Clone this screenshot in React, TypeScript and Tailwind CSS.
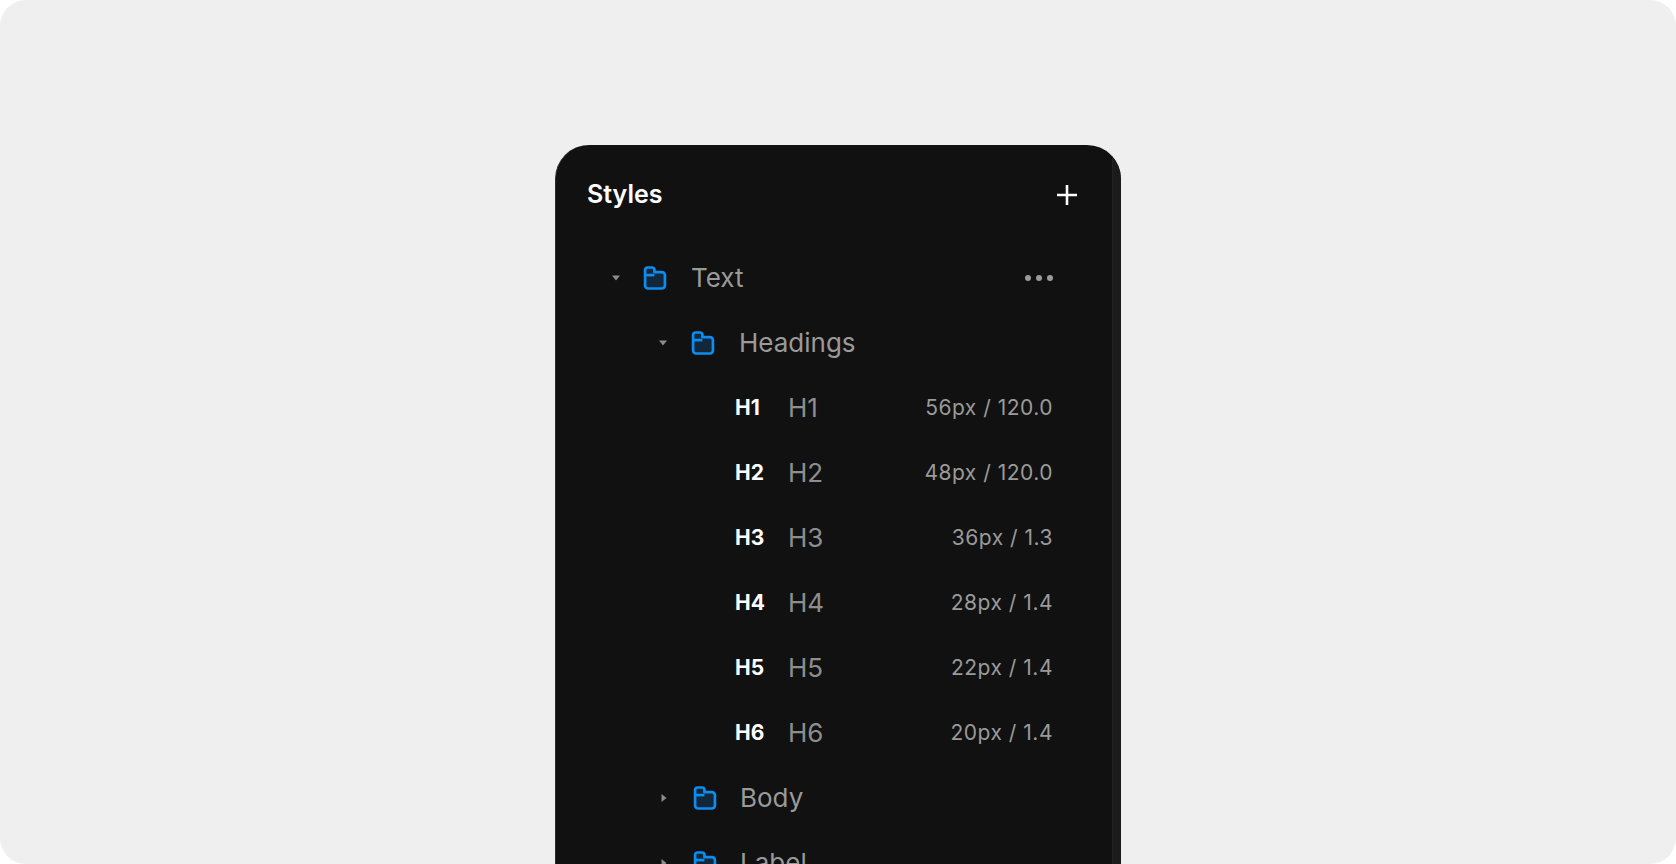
import React from "react";

const Folder = () => (
  <svg width="28" height="28" viewBox="0 0 24 24" fill="none">
    <path d="M3.5 9V5a2 2 0 0 1 2-2h4a2 2 0 0 1 2 2v2h6.5a2.5 2.5 0 0 1 2.5 2.5v9a2.5 2.5 0 0 1-2.5 2.5H6a2.5 2.5 0 0 1-2.5-2.5z" fill="#13273a" stroke="#0b8df2" strokeWidth="2.3" strokeLinejoin="round" />
    <path d="M3.5 9.5h8" stroke="#0b8df2" strokeWidth="2.3" />
  </svg>
);

const Down = () => (
  <svg width="10" height="8" viewBox="0 0 10 8"><path d="M1 1.5h8L5 6.5z" fill="#8c8c8c" /></svg>
);
const Right = () => (
  <svg width="8" height="10" viewBox="0 0 8 10"><path d="M1.5 1v8L6.5 5z" fill="#8c8c8c" /></svg>
);

const rows = [
  ["H1", "56px / 120.0"],
  ["H2", "48px / 120.0"],
  ["H3", "36px / 1.3"],
  ["H4", "28px / 1.4"],
  ["H5", "22px / 1.4"],
  ["H6", "20px / 1.4"],
];

export default function App() {
  return (
    <div className="w-[1676px] h-[864px] bg-white overflow-hidden" style={{ fontFamily: "Inter, 'Noto Sans', sans-serif" }}>
      <div className="w-full h-full bg-[#efefef] rounded-[26px] overflow-hidden pt-[145px] pl-[555px]">
        <div className="w-[566px] h-[760px] bg-[#111111] rounded-t-[34px] border-l border-[#2c2c2c] flex overflow-hidden">
          <div className="flex-1 flex flex-col">
            <div className="h-[100px] flex items-center justify-between pl-[31px] pr-[34px]">
              <span className="text-white text-[25px] font-semibold">Styles</span>
              <svg width="22" height="22" viewBox="0 0 22 22"><path d="M11 1v20M1 11h20" stroke="white" strokeWidth="2.6" /></svg>
            </div>
            <div className="h-[65px] flex items-center pr-[59px]">
              <div className="w-[58px] pl-[55px]"><Down /></div>
              <div className="ml-[27px]"><Folder /></div>
              <span className="ml-[22px] text-[26px] text-[#9a9a9a]">Text</span>
              <div className="ml-auto flex gap-[5px]">
                <span className="w-[6px] h-[6px] rounded-full bg-[#9a9a9a]" />
                <span className="w-[6px] h-[6px] rounded-full bg-[#9a9a9a]" />
                <span className="w-[6px] h-[6px] rounded-full bg-[#9a9a9a]" />
              </div>
            </div>
            <div className="h-[65px] flex items-center">
              <div className="pl-[102px]"><Down /></div>
              <div className="ml-[21px]"><Folder /></div>
              <span className="ml-[22px] text-[26px] text-[#9a9a9a]">Headings</span>
            </div>
            {rows.map(([h, v]) => (
              <div key={h} className="h-[65px] flex items-center pl-[179px] pr-[59px]">
                <span className="w-[53px] text-[21px] font-bold text-white">{h}</span>
                <span className="text-[26px] text-[#8e8e8e]">{h}</span>
                <span className="ml-auto text-[21px] tracking-[0.5px] text-[#9a9a9a]">{v}</span>
              </div>
            ))}
            {["Body", "Label"].map((b) => (
              <div key={b} className="h-[65px] flex items-center shrink-0">
                <div className="pl-[104px]"><Right /></div>
                <div className="ml-[23px]"><Folder /></div>
                <span className="ml-[21px] text-[26px] text-[#9a9a9a]">{b}</span>
              </div>
            ))}
          </div>
          <div className="w-[9px] bg-[#1b1b1b] border-l border-[#222]" />
        </div>
      </div>
    </div>
  );
}
